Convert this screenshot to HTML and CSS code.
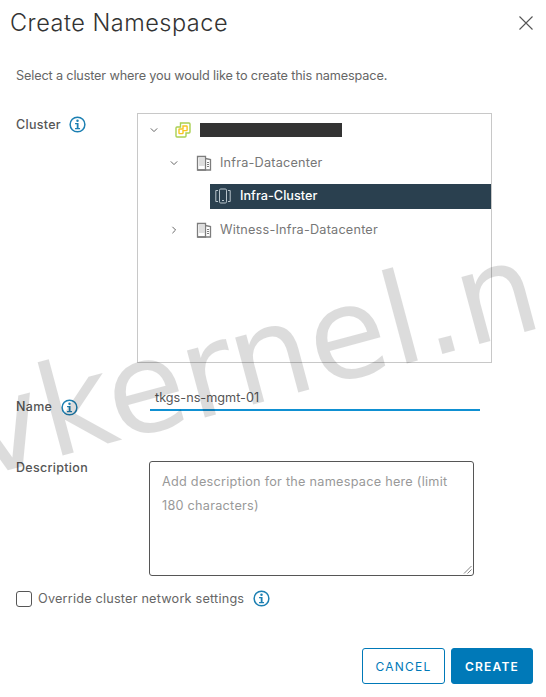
FILE: index.html
```html
<!DOCTYPE html>
<html lang="en">
<head>
<meta charset="utf-8">
<title>Create Namespace</title>
<link rel="stylesheet" href="styles.css">
</head>
<body>
<svg class="defs" width="0" height="0" aria-hidden="true">
  <symbol id="info" viewBox="0 0 18 18">
    <circle cx="9" cy="9" r="7.8" fill="none" stroke="#1b7fb2" stroke-width="1.6"/>
    <circle cx="9" cy="5" r="1.3" fill="#1b7fb2"/>
    <path d="M6.400 7.500H10.100V12.700H11.700V14H6.400V12.700H8.200V8.800H6.400Z" fill="#1b7fb2"/>
  </symbol>
  <symbol id="dc" viewBox="0 0 16 16">
    <g fill="none" stroke="#7d7d7d" stroke-width="1.300">
      <path d="M1.500 15V1.500H9.500V15Z"/>
      <path d="M9.500 3.500L14.500 4.500V15H1.500"/>
    </g>
    <path d="M3.500 3.500h1v1h-1zM5.500 3.500h1v1h-1zM7.500 3.500h.8v1h-.8zM3.500 5.500h1v1h-1zM5.500 5.500h1v1h-1zM7.500 5.500h.8v1h-.8zM3.500 7.500h1v1h-1zM5.500 7.500h1v1h-1zM7.500 7.500h.8v1h-.8zM3.500 9.500h1v1h-1zM5.500 9.500h1v1h-1zM7.500 9.500h.8v1h-.8zM11 7h2v1h-2zM11 9h2v1h-2zM11 11h2v1h-2z" fill="#7d7d7d"/>
  </symbol>
</svg>

<main class="dialog">
  <header class="head">
    <h1 class="title">Create Namespace</h1>
    <button class="close" type="button" aria-label="Close">
      <svg width="14" height="14" viewBox="0 0 14 14"><path d="M.5.500L13.500 13.500M13.500.500L.5 13.500" fill="none" stroke="#555" stroke-width="1.100"/></svg>
    </button>
  </header>

  <p class="intro">Select a cluster where you would like to create this namespace.</p>

  <section class="cluster">
    <div class="lbl cluster-lbl">Cluster <svg class="info"><use href="#info"/></svg></div>
    <div class="tree">
      <div class="node node-root">
        <svg class="chev" width="8" height="8" viewBox="0 0 8 8"><path d="M.8 2.400L4 5.600L7.200 2.400" fill="none" stroke="#666" stroke-width="1"/></svg>
        <svg class="vc" width="16" height="16" viewBox="0 0 16 16">
          <path d="M5.500 1H14a1 1 0 0 1 1 1v8a1 1 0 0 1-1 1H11v3a1 1 0 0 1-1 1H2a1 1 0 0 1-1-1V6a1 1 0 0 1 1-1h3.500Z" fill="none" stroke="#a9d052" stroke-width="1.400"/>
          <path d="M8 4h3.500a.6.6 0 0 1 .6.6V8a.6.6 0 0 1-.6.600H8V11a.6.6 0 0 1-.6.6H4.600a.6.6 0 0 1-.6-.6V7.600a.6.6 0 0 1 .6-.6H8Z" fill="none" stroke="#f7c520" stroke-width="1.400"/>
        </svg>
        <span class="redact"></span>
      </div>
      <div class="node node-dc">
        <svg class="chev" width="8" height="8" viewBox="0 0 8 8"><path d="M.8 2.400L4 5.600L7.200 2.400" fill="none" stroke="#666" stroke-width="1"/></svg>
        <svg class="dc"><use href="#dc"/></svg>
        <span class="name">Infra-Datacenter</span>
      </div>
      <div class="node node-sel">
        <svg class="clu" width="16" height="16" viewBox="0 0 16 16">
          <g fill="none" stroke="#b8c4cc" stroke-width="1">
            <rect x="4.500" y="1" width="7" height="14" rx="1.200"/>
            <path d="M3 2.500H.8V13.500H3M13 2.500H15.200V13.500H13M7 12.500H9"/>
          </g>
        </svg>
        <span class="name-sel">Infra-Cluster</span>
      </div>
      <div class="node node-wit">
        <svg class="chev" width="8" height="8" viewBox="0 0 8 8"><path d="M2.400.8L5.600 4L2.400 7.200" fill="none" stroke="#666" stroke-width="1"/></svg>
        <svg class="dc"><use href="#dc"/></svg>
        <span class="name">Witness-Infra-Datacenter</span>
      </div>
    </div>
  </section>

  <section class="name-row">
    <div class="lbl name-lbl">Name <svg class="info"><use href="#info"/></svg></div>
    <div class="input">tkgs-ns-mgmt-01</div>
  </section>

  <section class="desc-row">
    <div class="lbl desc-lbl">Description</div>
    <div class="area">
      Add description for the namespace here (limit 180 characters)
      <svg class="grip" width="9" height="9" viewBox="0 0 9 9"><path d="M1 8.500L8.500 1M4.500 8.500L8.500 4.500" fill="none" stroke="#777" stroke-width=".9"/></svg>
    </div>
  </section>

  <section class="check-row">
    <span class="box"></span>
    <span class="check-text">Override cluster network settings</span>
    <svg class="info"><use href="#info"/></svg>
  </section>

  <footer class="actions">
    <button class="btn cancel" type="button">CANCEL</button>
    <button class="btn create" type="button">CREATE</button>
  </footer>
</main>

<div class="watermark" aria-hidden="true">vkernel.n</div>
</body>
</html>
```

FILE: styles.css
```css
* { box-sizing: border-box; }
html, body { margin: 0; height: 100%; }
body {
  width: 546px;
  height: 697px;
  background: #fff;
  overflow: hidden;
  position: relative;
  font-family: "Inter", "Noto Sans", sans-serif;
  color: #565656;
}
.defs { position: absolute; }
.dialog { padding: 0 13px 0 16px; }
.head {
  display: flex;
  justify-content: space-between;
  align-items: flex-start;
  margin-left: -6px;
  height: 62px;
  padding-top: 8px;
}
.title {
  margin: 0;
  font-size: 23.500px;
  line-height: 29px;
  font-weight: 300;
  color: #333;
  letter-spacing: .5px;
}
.close {
  margin-top: 8px;
  padding: 0;
  border: 0;
  background: none;
  width: 14px;
  height: 14px;
  display: block;
}
.close svg { display: block; }
.intro {
  margin: 0;
  height: 51px;
  padding-top: 6px;
  font-size: 12.700px;
  line-height: 16px;
  letter-spacing: -.15px;
  color: #666;
}
.lbl {
  font-size: 12.500px;
  line-height: 16px;
  font-weight: 500;
  letter-spacing: .3px;
  color: #565656;
  display: flex;
  align-items: center;
}
.info { width: 17px; height: 17px; flex: none; }
.cluster { display: flex; }
.cluster-lbl { width: 121px; height: 22px; gap: 8px; align-items: flex-start; padding-top: 4px; }
.cluster-lbl .info { margin-top: -1px; }
.tree {
  width: 355px;
  height: 250px;
  border: 1px solid #c8c8c8;
  font-size: 12.700px;
  letter-spacing: .2px;
  color: #777;
}
.node { display: flex; align-items: center; }
.node-root { height: 31px; padding-left: 12px; }
.node-root .chev { margin-right: 17px; }
.vc { margin-right: 9px; }
.redact { width: 142px; height: 14px; background: #333; }
.node-dc { height: 35px; padding-left: 32px; }
.node-dc .chev, .node-wit .chev { margin-right: 18px; }
.dc { width: 16px; height: 16px; margin-right: 8px; }
.node-sel {
  height: 25px;
  margin-left: 72px;
  margin-top: 4px;
  padding: 0 0 2px 5px;
  background: #2a404f;
  color: #fff;
  font-weight: 500;
  letter-spacing: 0;
}
.clu { margin-right: 9px; }
.name-sel { color: #fff; }
.node-wit { height: 41px; padding-left: 32px; }
.name-row { display: flex; margin-top: 23px; height: 31px; }
.name-lbl { width: 134px; gap: 9px; padding-top: 14px; height: 28px; }
.input {
  width: 330px;
  height: 25px;
  padding: 1px 0 0 5px;
  border-bottom: 2px solid #0f90d2;
  font-size: 12.700px;
  line-height: 22px;
  color: #565656;
}
.desc-row { display: flex; margin-top: 44px; }
.desc-lbl { width: 133px; height: 16px; margin-top: -1px; }
.area {
  position: relative;
  width: 325px;
  height: 115px;
  padding: 8px 12px;
  border: 1px solid #565656;
  border-radius: 3px;
  font-size: 12.700px;
  line-height: 24px;
  letter-spacing: .25px;
  color: #999;
}
.grip { position: absolute; right: 1px; bottom: 1px; }
.check-row { display: flex; align-items: center; margin-top: 14px; height: 17px; }
.box {
  width: 16px;
  height: 16px;
  border: 1px solid #565656;
  border-radius: 3px;
  margin-right: 6px;
}
.check-text { font-size: 12.700px; line-height: 16px; letter-spacing: .2px; color: #666; margin-right: 9px; }
.actions { display: flex; justify-content: flex-end; gap: 6px; margin-top: 41px; }
.btn {
  width: 83px;
  height: 36px;
  padding: 0;
  border-radius: 3px;
  border: 1px solid #0079b8;
  font-family: inherit;
  font-size: 12px;
  letter-spacing: 1.200px;
}
.cancel { background: #fff; color: #0079b8; font-weight: 400; }
.create { background: #0079b8; color: #fff; width: 82px; font-weight: 600; }
.watermark {
  position: absolute;
  left: -13px;
  top: 358px;
  font-family: "DejaVu Sans", sans-serif;
  font-size: 127px;
  line-height: 150px;
  color: #000;
  opacity: .135;
  white-space: nowrap;
  transform: rotate(-15deg);
  transform-origin: 0 100%;
  pointer-events: none;
}
```
